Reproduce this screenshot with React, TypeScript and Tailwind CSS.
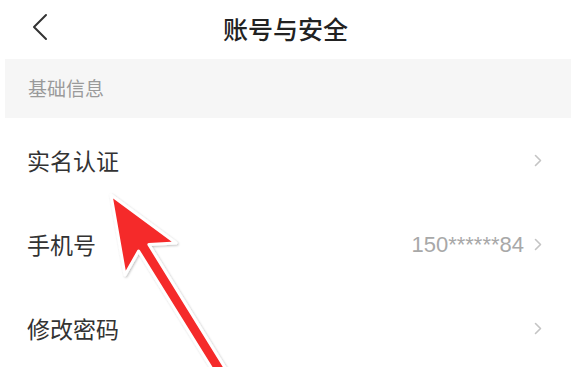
const font = { fontFamily: '"Noto Sans CJK SC", "Noto Sans", sans-serif' };

function Chevron() {
  return (
    <svg width="8" height="13" viewBox="0 0 8 13" className="shrink-0">
      <path d="M1.5 1.5 L6.5 6.5 L1.5 11.5" fill="none" stroke="#c4c4c4" strokeWidth="1.6" strokeLinecap="round" strokeLinejoin="round" />
    </svg>
  );
}

function Row({ label, value }: { label: string; value?: string }) {
  return (
    <div className="h-[84px] flex items-center justify-between pl-[27px] pr-[29px]">
      <span className="text-[23px] text-[#333333]">{label}</span>
      <div className="flex items-center gap-[10px]">
        {value && <span className="text-[22px] text-[#a8a8a8]" style={{ fontFamily: '"Liberation Sans", Arial, sans-serif' }}>{value}</span>}
        <Chevron />
      </div>
    </div>
  );
}

export default function App() {
  return (
    <div className="relative w-[571px] h-[367px] overflow-hidden bg-white" style={font}>
      {/* header */}
      <div className="relative h-[59px] flex items-center justify-center">
        <svg width="18" height="28" viewBox="0 0 18 28" className="absolute left-[31px] top-[13px]">
          <path d="M15 2 L3 14 L15 26" fill="none" stroke="#333" strokeWidth="2" strokeLinecap="round" strokeLinejoin="round" />
        </svg>
        <span className="text-[25px] font-medium text-[#222222] -mt-[2px]">账号与安全</span>
      </div>

      <div className="ml-[5px] h-[59px] bg-[#f6f6f6] flex items-center pl-[23px]">
        <span className="text-[19px] text-[#9a9a9a]">基础信息</span>
      </div>

      <Row label="实名认证" />
      <Row label="手机号" value="150******84" />
      <Row label="修改密码" />

      {/* red annotation arrow */}
      <svg className="absolute inset-0 pointer-events-none" width="571" height="367" viewBox="0 0 571 367">
        <defs>
          <filter id="sh" x="-20%" y="-20%" width="140%" height="140%">
            <feDropShadow dx="1" dy="1" stdDeviation="1.2" floodColor="#000" floodOpacity="0.25" />
          </filter>
        </defs>
        <polygon
          points="111,195 176,243 148.8,244.5 232,379 222,385 138.6,251 125,275"
          fill="#f52a2a"
          stroke="#ffffff"
          strokeWidth="3"
          strokeLinejoin="round"
          filter="url(#sh)"
        />
      </svg>
    </div>
  );
}
